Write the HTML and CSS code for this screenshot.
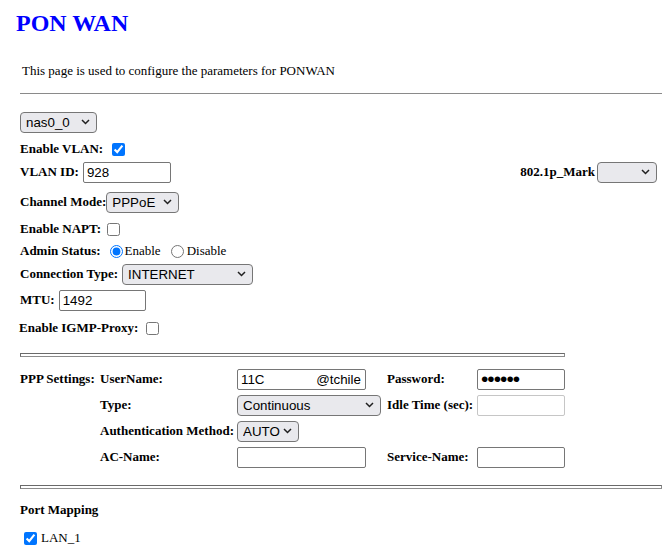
FILE: index.html
```html
<!DOCTYPE html>
<html lang="en">
<head>
    <meta charset="UTF-8" />
    <meta name="viewport" content="width=device-width, initial-scale=1.0" />
    <title>PON WAN</title>
    <link rel="stylesheet" href="styles.css">
</head>
<body>
    <h1 class="title">PON WAN</h1>

    <div class="content">
        <p class="intro">This page is used to configure the parameters for PONWAN</p>
        <hr class="line">

        <form class="wan-form">
            <div class="row">
                <select class="sel sel-wan"><option>nas0_0</option></select>
            </div>

            <div class="row gap-5">
                <b>Enable VLAN:</b>
                <input type="checkbox" class="chk chk-vlan" checked>
            </div>

            <div class="row gap-1 row-split">
                <span class="field">
                    <b>VLAN ID:</b>
                    <input type="text" class="txt txt-vlan" value="928">
                </span>
                <span class="field mark">
                    <b>802.1p_Mark</b>
                    <select class="sel sel-mark"><option></option></select>
                </span>
            </div>

            <div class="row gap-8">
                <b>Channel Mode:</b>
                <select class="sel sel-mode"><option>PPPoE</option></select>
            </div>

            <div class="row gap-5">
                <b>Enable NAPT:</b>
                <input type="checkbox" class="chk chk-napt">
            </div>

            <div class="row">
                <b>Admin Status:</b>
                <input type="radio" name="status" class="radio radio-on" checked>
                <span>Enable</span>
                <input type="radio" name="status" class="radio radio-off">
                <span class="radio-text">Disable</span>
            </div>

            <div class="row gap-1">
                <b>Connection Type:</b>
                <select class="sel sel-type"><option>INTERNET</option></select>
            </div>

            <div class="row gap-4">
                <b>MTU:</b>
                <input type="text" class="txt txt-mtu" value="1492">
            </div>

            <div class="row gap-6 row-igmp">
                <b>Enable IGMP-Proxy:</b>
                <input type="checkbox" class="chk chk-igmp">
            </div>

            <hr class="groove groove-short">

            <div class="ppp">
                <b>PPP Settings:</b>
                <b>UserName:</b>
                <span><input type="text" class="txt txt-wide" value="11C              @tchile"></span>
                <b>Password:</b>
                <span><input type="password" class="txt txt-small txt-pass" value="123456"></span>

                <span></span>
                <b>Type:</b>
                <span><select class="sel sel-conn"><option>Continuous</option></select></span>
                <b>Idle Time (sec):</b>
                <span><input type="text" class="txt txt-small" disabled></span>

                <span></span>
                <b>Authentication Method:</b>
                <span><select class="sel sel-auth"><option>AUTO</option></select></span>
                <span></span>
                <span></span>

                <span></span>
                <b>AC-Name:</b>
                <span><input type="text" class="txt txt-wide"></span>
                <b>Service-Name:</b>
                <span><input type="text" class="txt txt-small"></span>
            </div>

            <hr class="groove">

            <p class="section">Port Mapping</p>
            <div class="row port">
                <input type="checkbox" class="chk chk-lan" checked>
                <span>LAN_1</span>
            </div>
        </form>
    </div>
</body>
</html>
```

FILE: styles.css
```css
body {
    margin: 0;
    font-family: "Liberation Serif", "Times New Roman", serif;
    font-size: 13px;
    color: #000;
    background: #fff;
}
.title {
    margin: 10px 0 0 16px;
    font-size: 24px;
    color: #0000ff;
}
.content {
    padding-left: 20px;
}
.intro {
    margin: 26px 0 0 2px;
}
.line {
    margin: 14px 0 0 0;
    height: 0;
    border: none;
    border-top: 1px solid #8a8a8a;
}
.wan-form {
    margin-top: 17px;
}
.row {
    display: flex;
    align-items: center;
    height: 22px;
}
.gap-1 { margin-top: 1px; }
.gap-4 { margin-top: 4px; }
.gap-5 { margin-top: 5px; }
.gap-6 { margin-top: 6px; }
.gap-8 { margin-top: 8px; }
.row-split {
    justify-content: space-between;
    padding-right: 5px;
}
.field {
    display: flex;
    align-items: center;
}
.row-igmp {
    margin-left: -1px;
}

/* form controls */
.sel, .txt {
    box-sizing: border-box;
    height: 21px;
    margin: 0;
    font-family: "Liberation Sans", Arial, sans-serif;
    font-size: 13.33px;
    color: #000;
    border: 1px solid #767676;
}
.sel {
    appearance: none;
    -webkit-appearance: none;
    padding: 0 18px 0 5px;
    border-radius: 4px;
    background-color: #e9e9ed;
    background-image: url("data:image/svg+xml,%3Csvg xmlns='http://www.w3.org/2000/svg' width='9' height='6'%3E%3Cpath d='M1 1l3.5 3.5L8 1' fill='none' stroke='%23202020' stroke-width='1.5'/%3E%3C/svg%3E");
    background-repeat: no-repeat;
    background-position: right 6px center;
}
.txt {
    padding: 1px 3px;
    border-radius: 2px;
    background: #fff;
}
.txt:disabled {
    border-color: #c6c6c6;
    background: #fff;
}
.txt-pass {
    font-size: 21px;
    letter-spacing: -1px;
    padding: 0 3px;
}
.sel-wan { width: 77px; }
.sel-mark { width: 60px; margin-left: 2px; }
.sel-mode { width: 73px; }
.sel-type { width: 131px; margin-left: 4px; }
.sel-conn { width: 144px; }
.sel-auth { width: 62px; }
.txt-vlan { width: 88px; margin-left: 4px; }
.txt-mtu { width: 87px; margin-left: 4px; }
.txt-wide { width: 129px; }
.txt-small { width: 88px; }

.chk, .radio {
    width: 13px;
    height: 13px;
    margin: 0;
}
.chk-vlan { margin-left: 9px; }
.chk-napt { margin-left: 6px; }
.chk-igmp { margin-left: 8px; }
.radio-on { margin: 0 2px 0 9px; }
.radio-off { margin: 0 3px 0 10px; }

.groove {
    box-sizing: border-box;
    height: 4px;
    margin: 14px 0 0 0;
    border: 1px solid #6a6a6a;
    border-bottom-color: #8c8c8c;
    border-right-color: #8c8c8c;
    background: #fff;
}
.groove-short {
    width: 545px;
}
.ppp {
    display: grid;
    grid-template-columns: 80px 137px 150px 90px auto;
    grid-auto-rows: 26px;
    align-items: center;
    margin-top: 9px;
}
.ppp span {
    display: flex;
    align-items: center;
}
.ppp + .groove {
    margin-top: 15px;
}
.section {
    margin: 13px 0 0 0;
    font-weight: bold;
}
.port {
    margin-top: 9px;
}
.chk-lan {
    margin: 0 4px 0 4px;
}
```
